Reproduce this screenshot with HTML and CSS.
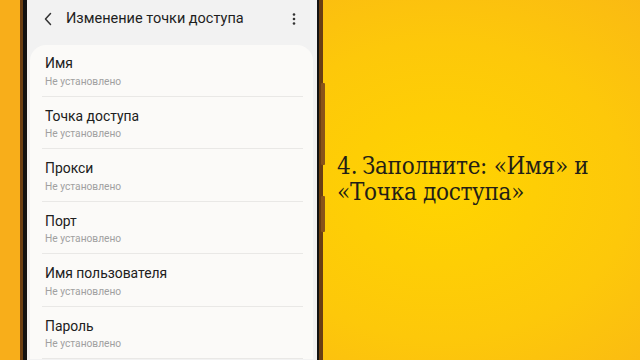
FILE: index.html
```html
<!DOCTYPE html>
<html lang="ru">
<head>
    <meta charset="UTF-8">
    <meta name="viewport" content="width=device-width, initial-scale=1.0">
    <title>Изменение точки доступа</title>
    <link rel="stylesheet" href="styles.css">
</head>
<body>
    <div class="stage">
        <div class="phone">
            <span class="side-btn btn-volume"></span>
            <span class="side-btn btn-power"></span>
            <div class="bezel">
                <div class="screen">
                    <div class="appbar">
                        <svg class="back" width="10" height="14" viewBox="0 0 10 14">
                            <path d="M7.5 1.5 L2.5 7 L7.5 12.5" fill="none" stroke="#333" stroke-width="1.5" stroke-linecap="round" stroke-linejoin="round"/>
                        </svg>
                        <span class="appbar-title">Изменение точки доступа</span>
                        <svg class="more" width="4" height="14" viewBox="0 0 4 14">
                            <circle cx="2" cy="2.5" r="1.3" fill="#333"/>
                            <circle cx="2" cy="7" r="1.3" fill="#333"/>
                            <circle cx="2" cy="11.5" r="1.3" fill="#333"/>
                        </svg>
                    </div>
                    <div class="card">
                        <div class="item">
                            <div class="item-title">Имя</div>
                            <div class="item-sub">Не установлено</div>
                        </div>
                        <div class="item">
                            <div class="item-title">Точка доступа</div>
                            <div class="item-sub">Не установлено</div>
                        </div>
                        <div class="item">
                            <div class="item-title">Прокси</div>
                            <div class="item-sub">Не установлено</div>
                        </div>
                        <div class="item">
                            <div class="item-title">Порт</div>
                            <div class="item-sub">Не установлено</div>
                        </div>
                        <div class="item">
                            <div class="item-title">Имя пользователя</div>
                            <div class="item-sub">Не установлено</div>
                        </div>
                        <div class="item">
                            <div class="item-title">Пароль</div>
                            <div class="item-sub">Не установлено</div>
                        </div>
                    </div>
                </div>
            </div>
        </div>

        <p class="caption">4.&#8239;Заполните: «Имя» и<br>«Точка доступа»</p>
    </div>
</body>
</html>
```

FILE: styles.css
```css
body {
    margin: 0;
    width: 640px;
    height: 360px;
    overflow: hidden;
    font-family: Roboto, "Noto Sans", sans-serif;
    background: radial-gradient(ellipse 420px 330px at 440px 190px, #ffd400 0%, #fdc80a 45%, #f8ae1a 100%);
}
.stage {
    display: flex;
    height: 360px;
}
.phone {
    position: relative;
    margin-left: 20px;
    height: 360px;
    background: #6a3e12;
    padding: 0 4px 0 3px;
}
.side-btn {
    position: absolute;
    right: -2px;
    width: 4px;
    background: #8a5419;
    border-radius: 1px;
}
.btn-volume {
    top: 83px;
    height: 82px;
}
.btn-power {
    top: 196px;
    height: 36px;
}
.bezel {
    height: 100%;
    background: #121212;
    padding: 0 2px 0 4px;
}
.screen {
    width: 290px;
    height: 100%;
    background: #f2f2f2;
    overflow: hidden;
}
.appbar {
    height: 37px;
    display: flex;
    align-items: center;
    padding: 0 21px 8px 16px;
}
.back {
    flex: none;
}
.appbar-title {
    flex: 1;
    margin-left: 13px;
    font-size: 14.5px;
    color: #1e1e1e;
}
.more {
    flex: none;
}
.card {
    margin: 0 4px 0 3px;
    background: #fbfaf8;
    border-radius: 16px 16px 0 0;
}
.item {
    margin: 0 10px 0 12px;
    padding: 11px 0 7px 3px;
    border-bottom: 1px solid #e9e8e6;
}
.item:first-child {
    padding-top: 10px;
}
.item-title {
    font-size: 13.9px;
    line-height: 17px;
    color: #202020;
}
.item-sub {
    margin-top: 1.5px;
    font-size: 10.2px;
    line-height: 15px;
    color: #a0a0a0;
}
.caption {
    margin: 153px 0 0 14px;
    font-family: "DejaVu Serif Condensed", "DejaVu Serif", serif;
    font-size: 24px;
    line-height: 26px;
    color: #231e16;
    letter-spacing: -0.3px;
}
```
